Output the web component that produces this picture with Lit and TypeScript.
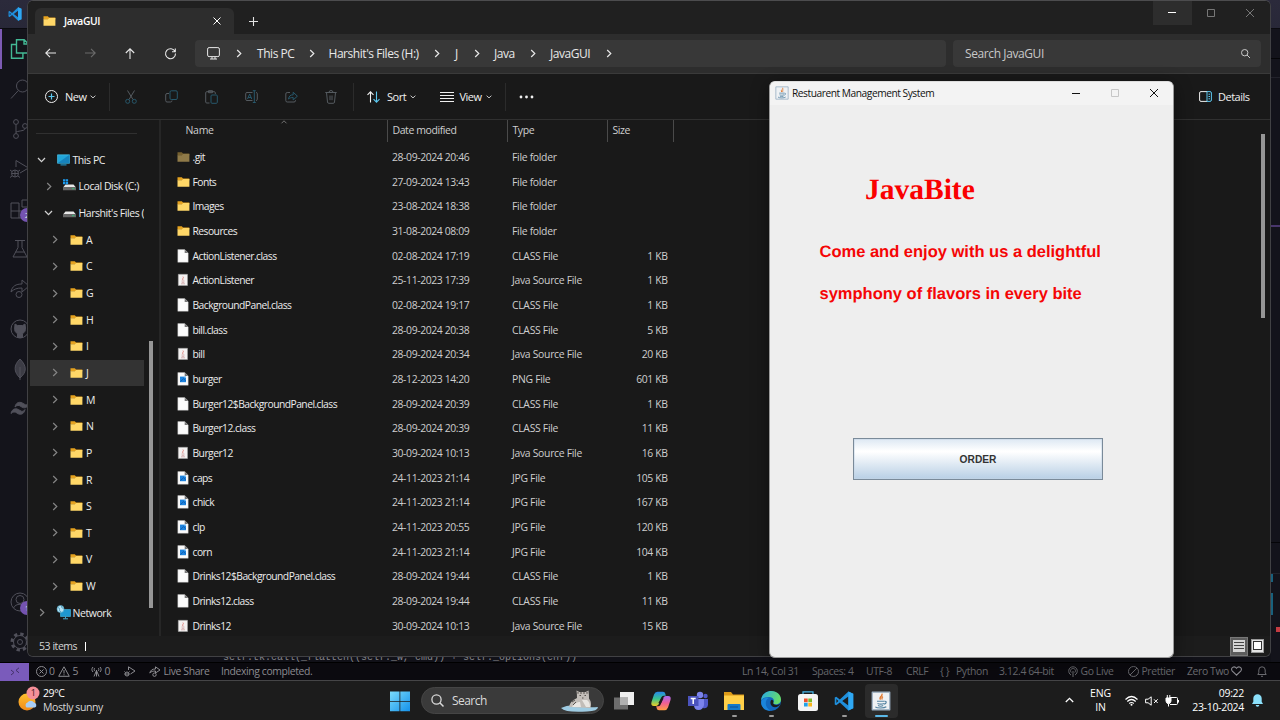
import { LitElement, html, svg, css } from "lit";
import { customElement } from "lit/decorators.js";
import { styleMap } from "lit/directives/style-map.js";

const icon = (w: number, h: number, box: string, body: unknown) =>
  html`<svg width=${w} height=${h} viewBox=${box} fill="none" stroke="currentColor">${body}</svg>`;

const px = (n: number) => styleMap({ width: n + "px" });

const folder = (dim = false) =>
  icon(13, 12, "0 0 13 12", svg`
    <path d="M0.5 1.2h4.3l1.2 1.4h6.3v2H.5z" fill=${dim ? "#75602f" : "#e5a21f"} stroke="none"/>
    <path d="M.5 10.7V4.2h4.4l1.3-1.1h6.2v7.6z" fill=${dim ? "#8f7a48" : "#ffd767"} stroke="none"/>`);

const page = (inner: unknown = null) =>
  icon(12, 14, "0 0 12 14", svg`
    <path d="M.8.6h6.9l3.5 3.3v9.4H.8z" fill="#fbfbfb" stroke="#b5b5b5" stroke-width=".4"/>
    <path d="M7.7.6v3.3h3.5z" fill="#777" stroke="none"/>${inner}`);

const javaPage = () =>
  icon(12, 14, "0 0 12 14", svg`
    <path d="M1.3 1.3h9.2v11.2H1.3z" fill="#f4f2f2" stroke="#a9a9a9" stroke-width=".5"/>
    <path d="M6 3.600c1.400 1.200-1.400 1.800 0 3.600" stroke="#d96c66" stroke-width=".8"/>
    <path d="M4.500 8h3M4.700 9.400h2.600M4 10.800h4" stroke="#c99" stroke-width=".7"/>`);

const picture = () =>
  page(svg`<path d="M3 4.600h6v5.600H3z" fill="#1d83de" stroke="none"/><path d="M3.400 9.600 6.600 6.600l2 2.200" stroke="#0b57a8" stroke-width=".8"/><path d="M7.600 4.800h1.200v1.200H7.600z" fill="#8fd0ff" stroke="none"/>`);

const chevR = () => icon(6, 9, "0 0 6 9", svg`<path d="m1.200 1 3.600 3.500L1.200 8" stroke-width="1.200"/>`);
const chevD = () => icon(9, 6, "0 0 9 6", svg`<path d="m1 1 3.500 3.600L8 1" stroke-width="1.300"/>`);
const chevS = () => icon(6, 4, "0 0 6 4", svg`<path d="m.6.7 2.400 2.200L5.400.7" stroke-width=".8"/>`);

const codeLogo = (s: number) =>
  icon(s, s, "0 0 24 24", svg`
    <path d="M17.300.6 7 10.100 2.700 6.800.9 7.700v8.600l1.800.9L7 13.900l10.300 9.500 5.800-2.600V3.200zM2.900 14.300V9.700L5.200 12zm14.300 3.200L9.900 12l7.300-5.500z" fill="#1f8fdc" stroke="none" fill-rule="evenodd"/>
    <path d="M17.300.6v22.800l5.800-2.600V3.200z" fill="#2fa8f3" stroke="none"/>`);

const cup = (s: number) =>
  icon(s, s, "0 0 20 20", svg`
    <path d="M1.200 1.200h17.600v17.600H1.200z" fill="#eef1f4" stroke="#9bb0c4" stroke-width="1.200" stroke-linejoin="round"/>
    <path d="M10.800 2.600c2 2.300-3.600 3.100-1.300 6M12 5.600c-1.900 1-.9 1.900-.9 3" stroke="#e0762c" stroke-width="1.300"/>
    <path d="M6 10.200h7.200M6.500 12.500c2 .8 4.600.8 6.400 0M7 14.600c1.600.7 3.800.7 5.200 0M13.400 10.300c2.600-.4 2.300 2.200-.3 2.800" stroke="#5382a1" stroke-width="1.100"/>
    <path d="M4.300 15.800c1.600 1.600 9 1.600 11 0" stroke="#5382a1" stroke-width="1.100"/>`);

const FILES: [string, string, string, string, string][] = [
  ["hidden", ".git", "28-09-2024 20:46", "File folder", ""],
  ["folder", "Fonts", "27-09-2024 13:43", "File folder", ""],
  ["folder", "Images", "23-08-2024 18:38", "File folder", ""],
  ["folder", "Resources", "31-08-2024 08:09", "File folder", ""],
  ["page", "ActionListener.class", "02-08-2024 17:19", "CLASS File", "1 KB"],
  ["java", "ActionListener", "25-11-2023 17:39", "Java Source File", "1 KB"],
  ["page", "BackgroundPanel.class", "02-08-2024 19:17", "CLASS File", "1 KB"],
  ["page", "bill.class", "28-09-2024 20:38", "CLASS File", "5 KB"],
  ["java", "bill", "28-09-2024 20:34", "Java Source File", "20 KB"],
  ["image", "burger", "28-12-2023 14:20", "PNG File", "601 KB"],
  ["page", "Burger12$BackgroundPanel.class", "28-09-2024 20:39", "CLASS File", "1 KB"],
  ["page", "Burger12.class", "28-09-2024 20:39", "CLASS File", "11 KB"],
  ["java", "Burger12", "30-09-2024 10:13", "Java Source File", "16 KB"],
  ["image", "caps", "24-11-2023 21:14", "JPG File", "105 KB"],
  ["image", "chick", "24-11-2023 21:14", "JPG File", "167 KB"],
  ["image", "clp", "24-11-2023 20:55", "JPG File", "120 KB"],
  ["image", "corn", "24-11-2023 21:14", "JPG File", "104 KB"],
  ["page", "Drinks12$BackgroundPanel.class", "28-09-2024 19:44", "CLASS File", "1 KB"],
  ["page", "Drinks12.class", "28-09-2024 19:44", "CLASS File", "11 KB"],
  ["java", "Drinks12", "30-09-2024 10:13", "Java Source File", "15 KB"],
];

const fileIcon = (k: string) =>
  k === "hidden" ? folder(true) : k === "folder" ? folder() : k === "java" ? javaPage() : k === "image" ? picture() : page();

const base = css`
  *, :host { box-sizing: border-box; }
  svg { display: block; flex: none; overflow: visible; }
  :host { font-family: "Open Sans", "Noto Sans", sans-serif; white-space: nowrap; }
`;

@customElement("code-editor")
class CodeEditor extends LitElement {
  static styles = [base, css`
    :host { display: flex; flex-direction: column; height: 681px; background: #111118; color: #5d5d68; }
    .title { height: 29px; background: linear-gradient(#2b2a3b, #282838); border-bottom: 1px solid #0b0b10; padding: 7px 0 0 8px; flex: none; }
    .body { flex: 1; display: flex; min-height: 0; }
    .acts { width: 40px; display: flex; flex-direction: column; background: #14141b; }
    .act { height: 40px; display: flex; align-items: center; justify-content: center; position: relative; flex: none; color: #50505a; }
    .act.on { color: #43b995; box-shadow: inset 2px 0 #7d5bb4; }
    .gap { flex: 1; }
    .dot { position: absolute; left: 20px; top: 19px; width: 14px; height: 14px; border-radius: 7px; background: #7453b0; color: #ddd; font-size: 8px; line-height: 14px; text-align: center; }
    .code { flex: 1; display: flex; align-items: flex-end; padding-left: 183px; font: 10px/8px "Liberation Mono", monospace; color: #85858a; }
    .map { width: 9px; display: flex; flex-direction: column; background: #13131b; }
    .m1 { height: 30px; border-bottom: 1px solid #050508; }
    .m2 { height: 19px; border-bottom: 1px solid #22222b; }
    .m3 { height: 149px; border-bottom: 2px solid #49366c; }
    .m4 { height: 316px; border-bottom: 1px solid #050508; }
    .m5 { height: 31px; border-bottom: 1px solid #22222b; }
    .b { width: 2px; background: #18607d; flex: none; }
    .b1 { height: 8px; } .b2 { height: 22px; margin-top: 11px; }
    .red { width: 4px; height: 5px; margin: 12px 0 0 5px; background: #c43b42; }
    .status { height: 19px; display: flex; align-items: center; background: #0b0a0f; border-top: 1px solid #000; border-bottom: 1px solid #454547; color: #8b8b90; font-size: 10.400px; letter-spacing: -0.38px; line-height: 16px; flex: none; }
    .status span { display: block; }
    .remote { width: 29px; height: 18px; background: #7a5bbb; color: #43316a; display: flex; align-items: center; justify-content: center; }
    .item { display: flex; align-items: center; gap: 2.500px; flex: none; padding-bottom: 1px; }
    .right { display: flex; margin-left: auto; color: #6a6a6f; }
  `];
  render() {
    const a = (body: unknown, dot = "", on = false) =>
      html`<div class="act ${on ? "on" : ""}">${icon(20, 20, "0 0 20 20", body)}${dot ? html`<span class="dot">${dot}</span>` : ""}</div>`;
    const it = (w: number, c: unknown) => html`<div class="item" style=${px(w)}>${c}</div>`;
    return html`
      <div class="title">${codeLogo(14)}</div>
      <div class="body">
        <div class="acts">
          ${a(svg`<path d="M6.500.8h7.700l4 4V14H6.500zM14 .8v4.200h4M6.500 5.500H1.500v13.800h11.400V14" stroke-width="1.400"/>`, "", true)}
          ${a(svg`<circle cx="12.500" cy="7" r="6"/><path d="m8.300 11.500-7.300 8"/>`)}
          ${a(svg`<circle cx="6" cy="3" r="2.400"/><circle cx="6" cy="17" r="2.400"/><circle cx="15" cy="7" r="2.400"/><path d="M6 5.500v9M15 9.500c0 2.500-5 2-9 3.500"/>`)}
          ${a(svg`<path d="M6 8V1.500L18.500 9 10 14"/><circle cx="5" cy="14.500" r="3.500"/><path d="M1.500 14.500h7M5 11v7M0 11l2 1.500M10 11l-2 1.500M0 18.500l2-1.500M10 18.500 8 17"/>`)}
          ${a(svg`<path d="M1 4h8v8h8v7H1zM1 12h8v7M12 1h7v7h-7z"/>`, "2")}
          ${a(svg`<path d="M5 1.500h10M8 1.500v7L3 18h14L12 8.500v-7M5.500 13h9"/>`)}
          ${a(svg`<path d="M1 13C2 7 6 5 12 5V1l7 6-7 6V9C7 9 4 10 1 13z"/><circle cx="9" cy="15.500" r="3"/>`)}
          ${a(svg`<circle cx="10" cy="10" r="9"/><path d="M7.500 18.500v-4C5 13.500 4.500 11.500 4.700 9L5 5l2.500 1.500h5L15 5l.5 4c0 2.500-.5 4.500-3 5.500v4z" fill="currentColor"/>`)}
          ${a(svg`<path d="M10 0c7 7 7 13 0 19C3.500 13 3.500 6 10 0z" fill="#3c3c45"/><path d="M10 8v13"/>`)}
          ${a(svg`<path d="M5 8c1-5 5-6 9-3 2 1.500 4 1 5-1-1 5-5 6-8 3.500C9 6 7 6 5 8zM1 14.500c1-5 5-6 9-3 2 1.500 4 1 5-1-1 5-5 6-8 3.500-2-1.500-4-1.500-6 .5z" fill="currentColor"/>`)}
          <div class="gap"></div>
          ${a(svg`<circle cx="10" cy="10" r="9"/><circle cx="10" cy="7.500" r="4"/><path d="M3.500 16c2-5 11-5 13 0"/>`, "1")}
          ${a(svg`<circle cx="10" cy="10" r="8" stroke-width="3" stroke-dasharray="3.300 2.983"/><circle cx="10" cy="10" r="6.500"/><circle cx="10" cy="10" r="2.500"/>`)}
        </div>
        <div class="code">self.tk.call(_flatten((self._w, cmd)) + self._options(cnf))</div>
        <div class="map"><div class="m1"></div><div class="m2"></div><div class="m3"></div><div class="m4"></div><div class="m5"></div>
          <div class="b b1"></div><div class="b b2"></div><div class="red"></div></div>
      </div>
      <div class="status">
        <div class="remote">${icon(10, 9, "0 0 10 9", svg`<path d="m1 3 3 2.500L1 8M9 .8 6 3.300l3 2.500"/>`)}</div>
        ${it(6.5, "")}
        ${it(22.5, html`${icon(11, 11, "0 0 11 11", svg`<circle cx="5.500" cy="5.500" r="5"/><path d="m3.500 3.500 4 4m0-4-4 4"/>`)}<span>0</span>`)}
        ${it(33, html`${icon(12, 11, "0 0 12 11", svg`<path d="M6 .8 11.300 10.300H.7zM6 4v3.500M6 8.300v1"/>`)}<span>5</span>`)}
        ${it(33, html`${icon(11, 11, "0 0 11 11", svg`<path d="M5.500 4v6.500M3 10.500l2.500-6 2.500 6M2 1C.5 2.500.5 4.500 2 6M9 1c1.500 1.500 1.500 3.500 0 5M3.700 2c-.7 1-.7 2 0 3M7.300 2c.7 1 .7 2 0 3"/>`)}<span>0</span>`)}
        ${it(25, icon(12, 11, "0 0 12 11", svg`<path d="M4.500 4V.8L11 5 6.500 8"/><circle cx="3" cy="8" r="2"/><path d="M.5 8h5M.5 5.500 1.500 6.500M5.500 5.500l-1 1"/>`))}
        ${it(72, html`${icon(12, 11, "0 0 12 11", svg`<path d="M.8 7C1.500 4 3.500 3 6.500 3V.8L11 4 6.500 7V5C4 5 2 5.500.8 7z"/><circle cx="5.500" cy="8.700" r="1.700"/>`)}<span>Live Share</span>`)}
        ${it(100, "Indexing completed.")}
        <div class="right">
          ${it(70, "Ln 14, Col 31")}${it(54, "Spaces: 4")}${it(40, "UTF-8")}${it(34, "CRLF")}
          ${it(16, "{ }")}${it(43, "Python")}${it(69, "3.12.4 64-bit")}
          ${it(60, html`${icon(10, 11, "0 0 10 11", svg`<path d="M5 5v6M3 9C-.5 7 0 .8 5 .8S10.500 7 7 9M3.300 6.500C1.500 4.500 3 2.500 5 2.500s3.500 2 1.700 4"/>`)}<span>Go Live</span>`)}
          ${it(59, html`${icon(11, 11, "0 0 11 11", svg`<circle cx="5.500" cy="5.500" r="5"/><path d="m2 9 7-7"/>`)}<span>Prettier</span>`)}
          ${it(70, html`<span>Zero Two</span>${icon(11, 10, "0 0 10 9", svg`<path d="M5 8.300 1 4.300C-.8 2 2.800-.8 5 2c2.200-2.800 5.800 0 4 2.300z" stroke="#8a8a90"/>`)}`)}
          ${it(23, icon(10, 11, "0 0 10 11", svg`<path d="M.8 8.500h8.400L8.200 6.800V4a3.200 3.200 0 0 0-6.400 0v2.800zM4 10.300h2"/>`))}
        </div>
      </div>`;
  }
}

@customElement("file-explorer")
class FileExplorer extends LitElement {
  static styles = [base, css`
    :host { display: flex; flex-direction: column; width: 1244px; height: 657px; border: 1px solid #414144; border-top-color: #4c4c4e; border-radius: 6px; overflow: hidden; background: #191919; color: #e4e4e4; font-size: 10.500px; letter-spacing: -0.4px; line-height: 16px; }
    .tabs { height: 33px; background: #202020; display: flex; align-items: flex-start; flex: none; }
    .tab { margin: 7px 0 0 7px; width: 199px; height: 26px; background: #2d2d2d; border-radius: 6px 6px 0 0; display: flex; align-items: center; padding: 0 13px 0 8px; font-size: 10.300px; font-weight: 600; letter-spacing: -0.4px; color: #fff; }
    .tab span { margin: 0 auto 0 8px; }
    .plus { margin: 16px auto 0 15px; }
    .wb { width: 38.700px; height: 24px; display: flex; align-items: center; justify-content: center; color: #777; }
    .wb.hot { background: #2d2d2d; color: #fff; }
    .wrap { width: 117px; display: flex; }
    .nav { height: 40px; background: #2d2d2d; border-bottom: 1px solid #3a3a3a; display: flex; align-items: center; flex: none; color: #e8e8e8; }
    .nb { width: 40px; display: flex; justify-content: center; }
    .nb.off { color: #6a6a6a; }
    .arrows { display: flex; padding-left: 2px; width: 167px; }
    .addr { width: 751px; height: 27px; background: #383838; border-radius: 4px; display: flex; align-items: center; font-size: 12px; letter-spacing: -0.45px; padding-left: 12px; }
    .search { width: 308px; height: 27px; margin-left: 7px; background: #383838; border-radius: 4px; display: flex; align-items: center; justify-content: space-between; padding: 0 11px 0 12px; color: #c8c8c8; font-size: 12px; letter-spacing: -0.4px; }
    .cell { display: flex; align-items: center; flex: none; }
    .cmd { height: 46px; border-bottom: 1px solid #303030; display: flex; align-items: center; flex: none; padding-left: 17px; font-size: 11px; letter-spacing: -0.5px; color: #f0f0f0; }
    .sep { width: 1px; height: 28px; background: #2b2b2b; flex: none; }
    .ico { width: 40px; display: flex; justify-content: center; color: #555b60; }
    .main { flex: 1; display: flex; min-height: 0; }
    .tree { width: 121px; padding: 13px 0 0 2px; color: #ececec; }
    .rule { height: 1px; background: #303030; margin: 0 12px 12.500px 6px; }
    .node { height: 26.650px; width: 114px; display: flex; align-items: center; overflow: hidden; letter-spacing: -0.44px; }
    .node.on { background: #333; }
    .node .tw { width: 9px; display: flex; justify-content: center; color: #858585; }
    .node .tw.open { color: #d0d0d0; }
    .node b { font-weight: 400; margin-left: 3px; }
    .l0 { padding-left: 7px; } .l1 { padding-left: 14px; } .l2 { padding-left: 20.500px; }
    .glyph { margin-left: 10.500px; }
    .l1 .glyph { margin-left: 9.500px; }
    .tbar { width: 4px; height: 267px; margin-top: 221px; background: #969696; }
    .split { width: 2px; margin-left: 6px; background: #262626; }
    .list { flex: 1; display: flex; flex-direction: column; }
    .head { height: 24.800px; display: grid; grid-template-columns: 227px 120px 100px 66px; color: #cfcfcf; flex: none; position: relative; font-size: 10.500px; letter-spacing: -0.42px; }
    .head div { height: 22px; border-right: 1px solid #4a4a4a; padding: 2px 0 0 4.500px; }
    .head .nm { padding-left: 24.500px; letter-spacing: -0.3px; }
    .up { position: absolute; left: 120px; top: 0; color: #888; }
    .row { height: 24.670px; display: grid; grid-template-columns: 16px 199.500px 120px 95.500px 60px; align-items: center; padding-left: 15.500px; flex: none; color: #cecece; font-size: 10.400px; letter-spacing: -0.38px; }
    .row .n { color: #ececec; font-size: 10.300px; letter-spacing: -0.53px; }
    .row .t { letter-spacing: -0.3px; }
    .row .s { text-align: right; }
    .rows { overflow: hidden; flex: 1; }
    .sbar { width: 4px; height: 184px; margin: 14px 5px 0 0; background: #969696; }
    .foot { height: 20px; background: #1c1c1c; display: flex; align-items: center; padding-left: 11px; flex: none; color: #d5d5d5; letter-spacing: -0.45px; }
    .caret { width: 1px; height: 9px; background: #fff; margin-left: 8px; margin-right: auto; }
    .v1 { width: 18px; height: 19px; background: #5c5c5c; border: 1px solid #777; display: flex; align-items: center; justify-content: center; }
    .v2 { width: 13px; height: 14px; margin: 0 6px 0 3px; background: #e4e4e4; border: 1px solid #999; padding: 1px; }
    .v2 i { display: block; width: 9px; height: 9px; background: #fff; border: 1.500px solid #333; }
  `];
  render() {
    const c = (w: number, x: unknown) => html`<div class="cell" style=${px(w)}>${x}</div>`;
    const node = (lvl: number, open: boolean, glyph: unknown, name: string, on = false) => html`
      <div class="node l${lvl} ${on ? "on" : ""}"><span class="tw ${open ? "open" : ""}">${open ? chevD() : chevR()}</span><span class="glyph">${glyph}</span><b>${name}</b></div>`;
    const drive = (win: boolean) => icon(13, 12, "0 0 13 12", svg`
      <path d="M2.500 4.500h8L13 7.500H0z" fill="#e8e8e8" stroke="none"/><path d="M0 7h13v3.300H0z" fill="#686868" stroke="none"/><path d="M9 8.700h2.500" stroke="#2ad17a" stroke-width=".8"/>
      ${win ? svg`<path d="M0-.8h2.300v2.300H0zM2.800-.8h2.300v2.300H2.800zM0 2h2.300v2.300H0zM2.800 2h2.300v2.300H2.800z" fill="#1e9cf0" stroke="none"/>` : ""}`);
    const pc = icon(13, 12, "0 0 13 12", svg`<path d="M.5.8h12v8.500H.5z" fill="#22a5d8" stroke="#51c9ee" stroke-width=".6"/><path d="M12.500.8v8.500H.5z" fill="#1683bd" stroke="none"/><path d="M3.500 10.800h6" stroke="#1f87b4" stroke-width="1.200"/>`);
    const net = icon(13, 13, "0 0 13 13", svg`<path d="M3.500 3.500h10v7h-10z" fill="#1e98d0" stroke="#46bde8" stroke-width=".6"/><path d="M8.500 10.500v2M6 12.800h5" stroke="#46a9cc"/><circle cx="3.500" cy="3" r="3.500" fill="#b9e3f3" stroke="#4aa3c5" stroke-width=".6"/><path d="M1 1.500q2 .5 1.500 2T4 6M4.500 0q-.5 2 2 2.500" stroke="#3c93b8" stroke-width=".8"/>`);
    return html`
      <div class="tabs">
        <div class="tab">${folder()}<span>JavaGUI</span>${icon(8, 8, "0 0 8 8", svg`<path d="m.5.5 7 7m0-7-7 7"/>`)}</div>
        <div class="plus">${icon(9, 9, "0 0 9 9", svg`<path d="M4.500 0v9M0 4.500h9" stroke-width="1.100"/>`)}</div>
        <div class="wrap">
          <div class="wb hot">${icon(8, 8, "0 0 8 8", svg`<path d="M0 3.500h8"/>`)}</div>
          <div class="wb">${icon(8, 8, "0 0 8 8", svg`<path d="M.5.5h7v7h-7z"/>`)}</div>
          <div class="wb">${icon(8, 8, "0 0 8 8", svg`<path d="m0 0 8 8m0-8-8 8"/>`)}</div>
        </div>
      </div>
      <div class="nav">
        <div class="arrows">
          <div class="nb">${icon(11, 10, "0 0 11 10", svg`<path d="M11 5H.8M5 .8.8 5 5 9.200" stroke-width="1.100"/>`)}</div>
          <div class="nb off">${icon(11, 10, "0 0 11 10", svg`<path d="M0 5h10.200M6 .8 10.200 5 6 9.200" stroke-width="1.100"/>`)}</div>
          <div class="nb">${icon(10, 11, "0 0 10 11", svg`<path d="M5 11V.8M.8 5 5 .8 9.200 5" stroke-width="1.100"/>`)}</div>
          <div class="nb">${icon(11, 11, "0 0 11 11", svg`<path d="M10 3.500A5 5 0 1 0 10.500 5.500M10.300.5v3.300H7" stroke-width="1.100"/>`)}</div>
        </div>
        <div class="addr">
          ${c(28.5, icon(13, 13, "0 0 13 13", svg`<rect x=".6" y=".6" width="11.800" height="9" rx="1.500"/><path d="M3 12h7M5 10v2M8 10v2"/>`))}
          ${c(21.5, chevR())}${c(51.5, "This PC")}${c(20, chevR())}${c(105.5, "Harshit's Files (H:)")}${c(21, chevR())}
          ${c(19, "J")}${c(20, chevR())}${c(36, "Java")}${c(20, chevR())}${c(56, "JavaGUI")}${c(18, chevR())}
        </div>
        <div class="search"><span>Search JavaGUI</span>${icon(9, 9, "0 0 9 9", svg`<circle cx="3.700" cy="3.700" r="3.200"/><path d="m6 6 3 3"/>`)}</div>
      </div>
      <div class="cmd">
        ${c(20, icon(13, 13, "0 0 13 13", svg`<circle cx="6.500" cy="6.500" r="6"/><path d="M6.500 3.500v6M3.500 6.500h6" stroke="#5cc8f0" stroke-width="1.200"/>`))}
        ${c(25, "New")}${c(18.5, chevS())}<div class="sep"></div>${c(1.5, "")}
        <div class="ico">${icon(12, 14, "0 0 12 14", svg`<path d="m2.500.5 5.500 9M9.500.5 4 9.500"/><circle cx="2.700" cy="11.300" r="2" stroke="#27586c"/><circle cx="9.300" cy="11.300" r="2" stroke="#27586c"/>`)}</div>
        <div class="ico">${icon(13, 13, "0 0 13 13", svg`<path d="M4 3.500H2Q.7 3.500.7 5v5.500Q.7 12 2 12h3.500Q7 12 7 10.500"/><rect x="5" y=".8" width="7.300" height="8.700" rx="1.300" stroke="#27586c"/>`)}</div>
        <div class="ico">${icon(13, 14, "0 0 13 14", svg`<path d="M4.500 13H1.800Q.7 13 .7 12V2.800Q.7 1.700 1.800 1.700h7.400Q10.300 1.700 10.300 2.800V4M3.500.7h4v2h-4z"/><rect x="6" y="5" width="6.300" height="8.300" rx="1" stroke="#27586c"/>`)}</div>
        <div class="ico">${icon(13, 13, "0 0 13 13", svg`<path d="M7.500 10.500H2Q.7 10.500.7 9.300V3.700Q.7 2.500 2 2.500h5.500M11 2.500q1.300 0 1.300 1.200v5.600q0 1.200-1.300 1.200"/><path d="M9.300.7v12M7.800.7h3M7.800 12.500h3M2.500 9 4.700 4l2 5M3.200 7.500h3" stroke="#27586c"/>`)}</div>
        <div class="ico">${icon(13, 12, "0 0 13 12", svg`<path d="M5 1.500H2.200Q.8 1.500.8 3v6.500Q.8 11 2.200 11H9q1.500 0 1.500-1.500V9"/><path d="M3.500 8c.5-3 2-4.200 4.700-4.200V1.200l4.200 4-4.200 3.700V6.500C6 6.500 4.700 7 3.500 8z" stroke="#27586c"/>`)}</div>
        <div class="ico">${icon(12, 14, "0 0 12 14", svg`<path d="M.3 2.500h11.400M4 2.500q0-2 2-2t2 2M1.500 2.500 2.500 12q.1 1.300 1.300 1.300h4.400q1.200 0 1.300-1.300l1-9.500M5 5.500v4.700M7 5.500v4.700"/>`)}</div>
        ${c(1.5, "")}<div class="sep"></div>${c(13.5, "")}
        ${c(20, icon(13, 12, "0 0 13 12", svg`<path d="M3.500 11.500V.8M.5 3.800l3-3 3 3" stroke-width="1.100"/><path d="M9.500.5v10.700M6.500 8.200l3 3 3-3" stroke="#5cc8f0" stroke-width="1.100"/>`))}
        ${c(22.5, "Sort")}${c(30, chevS())}
        ${c(20, icon(14, 10, "0 0 14 10", svg`<path d="M0 .5h14M0 3.500h14M0 6.500h14M0 9.500h14"/>`))}
        ${c(26, "View")}${c(19.5, chevS())}<div class="sep"></div>${c(12.5, "")}
        ${c(680, icon(15, 4, "0 0 15 4", svg`<circle cx="2" cy="2" r="1.400" fill="currentColor" stroke="none"/><circle cx="7.500" cy="2" r="1.400" fill="currentColor" stroke="none"/><circle cx="13" cy="2" r="1.400" fill="currentColor" stroke="none"/>`))}
        ${c(19.5, icon(13, 11, "0 0 13 11", svg`<path d="M8 .6H2Q.6.6.6 2v7Q.6 10.400 2 10.400h6"/><path d="M8 .6h3Q12.400.6 12.400 2v7q0 1.400-1.400 1.400H8zM9.500 3.200h1.500M9.500 5.500h1.500M9.500 7.800h1.500" stroke="#5cc8f0"/>`))}
        <span>Details</span>
      </div>
      <div class="main">
        <div class="tree">
          <div class="rule"></div>
          ${node(0, true, pc, "This PC")}${node(1, false, drive(true), "Local Disk (C:)")}${node(1, true, drive(false), "Harshit's Files (H:)")}
          ${["A", "C", "G", "H", "I", "J", "M", "N", "P", "R", "S", "T", "V", "W"].map((n) => node(2, false, folder(), n, n === "J"))}
          ${node(0, false, net, "Network")}
        </div>
        <div class="tbar"></div><div class="split"></div>
        <div class="list">
          <div class="head"><div class="nm">Name</div><div>Date modified</div><div>Type</div><div>Size</div>
            <span class="up">${icon(6, 4, "0 0 6 4", svg`<path d="m.5 3.300 2.500-2.500 2.500 2.500" stroke-width=".8"/>`)}</span></div>
          <div class="rows">
            ${FILES.map(([k, n, d, t, s]) => html`<div class="row"><span>${fileIcon(k)}</span><span class="n">${n}</span><span>${d}</span><span class="t">${t}</span><span class="s">${s}</span></div>`)}
          </div>
        </div>
        <div class="sbar"></div>
      </div>
      <div class="foot"><span>53 items</span><span class="caret"></span>
        <div class="v1">${icon(12, 12, "0 0 12 12", svg`<path d="M0 0h12v12H0z" fill="#d5d5d5" stroke="none"/><path d="M1 2.500h10M1 5.500h10M1 8.500h10" stroke="#444"/>`)}</div>
        <div class="v2"><i></i></div></div>`;
  }
}

@customElement("java-window")
class JavaWindow extends LitElement {
  static styles = [base, css`
    :host { display: flex; flex-direction: column; width: 405px; height: 577px; background: #eee; border: 1px solid #9a9a9a; border-top-color: #ddd; border-radius: 6px; overflow: hidden; box-shadow: 0 4px 18px rgba(0, 0, 0, .45); }
    .bar { height: 23px; background: #f3f3f3; display: flex; align-items: center; padding: 0 0 1px 5px; font-size: 10.200px; letter-spacing: -0.45px; color: #111; flex: none; }
    .bar span { margin: 0 auto 0 3px; }
    .b { width: 39px; display: flex; justify-content: center; color: #111; }
    .b.off { color: #c6c6c6; }
    .content { flex: 1; display: flex; flex-direction: column; align-items: flex-start; }
    h1 { margin: 68px 0 0 95px; font: bold 29.500px/34px "Liberation Serif", serif; color: #fa0000; text-rendering: geometricPrecision; }
    p { margin: 0 0 0 49.500px; font: bold 16.500px/42px "Liberation Sans", sans-serif; color: #f50505; text-rendering: geometricPrecision; }
    .p1 { margin-top: 24px; }
    button { margin: 123px 0 0 83px; width: 250px; height: 42px; padding: 1px 0 0; border: 1px solid #7a8a99; box-shadow: inset 0 0 0 .5px #c5d5e5; background: linear-gradient(#dde8f3, #fff 30%, #fff 32%, #b8cfe5); font: bold 10.200px "Liberation Sans", sans-serif; color: #333; }
  `];
  render() {
    return html`
      <div class="bar">${cup(14)}<span>Restuarent Management System</span>
        <div class="b">${icon(8, 8, "0 0 8 8", svg`<path d="M0 4.500h8"/>`)}</div>
        <div class="b off">${icon(8, 8, "0 0 8 8", svg`<path d="M.5.5h7v7h-7z"/>`)}</div>
        <div class="b">${icon(8, 8, "0 0 8 8", svg`<path d="m0 0 8 8m0-8-8 8"/>`)}</div></div>
      <div class="content"><h1>JavaBite</h1><p class="p1">Come and enjoy with us a delightful</p><p>symphony of flavors in every bite</p><button>ORDER</button></div>`;
  }
}

@customElement("task-bar")
class TaskBar extends LitElement {
  static styles = [base, css`
    :host { display: flex; align-items: center; height: 39px; background: #1c1c1c; color: #fff; font-size: 10.500px; letter-spacing: -0.2px; line-height: 13.300px; }
    .weather { width: 379px; display: flex; align-items: center; padding-left: 17px; gap: 2px; color: #d6d6d6; letter-spacing: -0.4px; }
    .t { color: #fff; }
    .app { width: 36.700px; height: 34px; display: flex; align-items: center; justify-content: center; position: relative; flex: none; }
    .app.run::after { content: ""; position: absolute; bottom: 1px; width: 5px; height: 2px; border-radius: 1px; background: #9a9a9a; }
    .app.sel::after { width: 13px; background: #5ab8e8; }
    .app.sel { background: #2b2b2b; border-radius: 4px; width: 33px; margin-left: 2px; }
    .start { width: 42px; padding-right: 1px; }
    .pill { width: 183px; height: 27px; border-radius: 14px; background: #3a3a3a; border: 1px solid #454545; display: flex; align-items: center; padding: 0 5px 0 9px; font-size: 12px; letter-spacing: -0.55px; color: #dadada; margin-right: 2px; }
    .pill span { margin: 0 auto 0 8px; }
    .tray { margin-left: auto; display: flex; align-items: center; }
    .up { width: 22px; } .lang { width: 31px; text-align: center; margin-right: 9px; }
    .sys { width: 20px; display: flex; } .time { text-align: right; width: 53px; letter-spacing: -0.3px; display: flex; flex-direction: column; align-items: flex-end; margin-left: 6px; }
    .bell { width: 36px; padding-left: 7.500px; }
  `];
  render() {
    const app = (cls: string, body: unknown) => html`<div class="app ${cls}">${body}</div>`;
    const i20 = (b: unknown) => icon(20, 20, "0 0 20 20", b);
    return html`
      <div class="weather">${icon(24, 24, "0 0 24 24", svg`<defs><linearGradient id="sun" x2="0" y2="1"><stop stop-color="#ffc02e"/><stop offset="1" stop-color="#f08a1c"/></linearGradient></defs>
          <circle cx="10" cy="13" r="8.500" fill="url(#sun)" stroke="none"/><path d="M9.500 18.500a3 3 0 0 1 1-5 4 4 0 0 1 6.500 0 2.700 2.700 0 0 1 1 5z" fill="#a8cdf5" stroke="none"/>
          <circle cx="16" cy="4" r="6.500" fill="#f58f98" stroke="none"/><text x="16" y="7.300" font-size="9" text-anchor="middle" fill="#40161a" stroke="none">1</text>`)}
        <div><div class="t">29°C</div><div>Mostly sunny</div></div></div>
      ${app("start", i20(svg`<defs><linearGradient id="win" x2="1" y2="1"><stop stop-color="#7bdcfb"/><stop offset="1" stop-color="#1491ea"/></linearGradient></defs><path d="M0 .5h9.500V10H0zM10.300.5H20V10h-9.700zM0 10.800h9.500v9.400H0zM10.300 10.800H20v9.400h-9.700z" fill="url(#win)" stroke="none"/>`))}
      <div class="pill">${icon(13, 13, "0 0 13 13", svg`<circle cx="5.500" cy="5.500" r="4.600" stroke-width="1.300"/><path d="m8.800 8.800 3.700 3.700" stroke-width="1.500"/>`)}<span>Search</span>
        ${icon(37, 22, "0 0 37 22", svg`<path d="M0 18q8-4 18-2t19 1q0 4-11 4.500Q5 23 0 18z" fill="#9ecbe2" stroke="none"/>
          <path d="M8 17q1-6 8-9 0-4-.5-7.500l3 1.500h6l3-1.500q.500 4 .5 8 3 4 1.500 9.500z" fill="#c2bdb8" stroke="none"/><path d="M11 17q3-5 8-5l1 5zM21 10l4 7h4q0-5-3-7z" fill="#e9e6e2" stroke="none"/>
          <path d="M18.500 5.500H20M23.500 5.500H25M21 8h1.500M11 12l3-2M12 15l3-3M17 1.800v2M26 1.800v2M20 2v2M23 2v2" stroke="#59534f"/>`)}</div>
      ${app("", i20(svg`<path d="M6 1h14v13H6z" fill="#eee" stroke="none"/><path d="M0 6.500h14v12H0z" fill="#777" opacity=".9" stroke="none"/><path d="M6 6.500h8V14H6z" fill="#b0b0b0" stroke="none"/>`))}
      ${app("", i20(svg`<defs><linearGradient id="cp1" x2="0" y2="1"><stop stop-color="#2787ea"/><stop offset=".5" stop-color="#38c48c"/><stop offset="1" stop-color="#f2cf25"/></linearGradient><linearGradient id="cp2" x2="0" y2="1"><stop stop-color="#a86af3"/><stop offset=".5" stop-color="#ef5f94"/><stop offset="1" stop-color="#ff9e42"/></linearGradient></defs>
          <path d="M6.500.800h5.500q2 0 2.300 2l.5 2h-2q-2 0-2.700 2.200L8.300 12q-1 3-3 3H3Q-.5 15 .5 11L3 3.500Q4 .8 6.500.8z" fill="url(#cp1)" stroke="none"/>
          <path d="M13.500 19.200H8q-2 0-2.300-2l-.5-2h2q2 0 2.700-2.200L11.700 8q1-3 3-3H17q3.500 0 2.500 4L17 16.500q-1 2.700-3.500 2.700z" fill="url(#cp2)" stroke="none"/><path d="M8.500 12.500 11.500 7" stroke="#1c1c1c" stroke-width="2.500"/>`))}
      ${app("", i20(svg`<circle cx="12" cy="4" r="3.200" fill="#7b83eb" stroke="none"/><circle cx="17.500" cy="5" r="2.200" fill="#5059c9" stroke="none"/><path d="M14 8h6v6q-1 4-5 3z" fill="#5059c9" stroke="none"/><path d="M6 8h10v6q-1 5-5.500 5T6 14z" fill="#7b83eb" stroke="none"/><path d="M0 5h10.500v10H0z" fill="#4b53bc" stroke="none"/><path d="M2.700 7.500h5M5.200 7.500v5.500" stroke="#fff" stroke-width="1.500"/>`))}
      ${app("run", i20(svg`<path d="M0 1h7l2 2.500h11V10H0z" fill="#dc9a18" stroke="none"/><path d="M0 4.500h20V19H0z" fill="#ffcf48" stroke="none"/><path d="M3.500 19v-5q0-1 1-1h11q1 0 1 1v5z" fill="#1479c9" stroke="none"/><path d="M6 16h8" stroke="#0b4f93"/>`))}
      ${app("run", i20(svg`<defs><linearGradient id="ed" x1="0" x2="1" y2=".3"><stop stop-color="#27a8e8"/><stop offset="1" stop-color="#65dc6c"/></linearGradient></defs>
          <circle cx="10" cy="10" r="10" fill="#1267bd" stroke="none"/><path d="M0 9.500C.5 4 4.500 0 10.300 0 16 0 20 4 20 8.500c0 3-2.200 4.800-5 4.800-2.500 0-3.300-1-2.500-2C14 8.500 11.500 6 8 6 4 6 1 7.500 0 9.500z" fill="url(#ed)" stroke="none"/><path d="M8 7C3 9 4 17 9.500 19.500 3 21-2 13 1 9q3-3 7-2z" fill="#1b85dc" stroke="none"/><path d="M12.300 11.500c-1 2 3.700 3.500 7 1.300-1 2.200-3 3.500-5.300 3.500-4 0-6-5-3.500-7.500 1.500 0 2.300 1.500 1.800 2.700z" fill="#1c1c1c" stroke="none"/>`))}
      ${app("", i20(svg`<path d="M5 4V.8h10V4" stroke="#44b4e8" stroke-width="1.200"/><rect x="0" y="3" width="20" height="17" rx="2.500" fill="#f4f4f4" stroke="none"/><path d="M6 7.500h3.700v3.700H6z" fill="#f0512a" stroke="none"/><path d="M10.300 7.500H14v3.700h-3.700z" fill="#7cba2b" stroke="none"/><path d="M6 11.800h3.700v3.700H6z" fill="#21a2e8" stroke="none"/><path d="M10.300 11.800H14v3.700h-3.700z" fill="#fbb61c" stroke="none"/>`))}
      ${app("run", codeLogo(20))}
      ${app("run sel", cup(20))}
      <div class="tray">
        <div class="up">${icon(9, 6, "0 0 9 6", svg`<path d="m2.800 4 3.700-3.700L10.200 4" stroke-width="1.300"/>`)}</div>
        <div class="lang">ENG<br />IN</div>
        <div class="sys">${icon(13, 11, "0 0 13 11", svg`<path d="M.5 4.500q6-6 12 0M2.300 6.500q4.200-4 8.400 0M4.200 8.500q2.300-2 4.600 0" stroke-width="1.200"/><circle cx="6.500" cy="9.700" r="1" fill="currentColor" stroke="none"/>`)}</div>
        <div class="sys">${icon(14, 10, "0 0 14 10", svg`<path d="M.6 3.200h2.500L6.200.8v8.400L3.100 6.800H.6zM9 3.300l3.700 3.700M12.700 3.300 9 7"/>`)}</div>
        <div class="sys">${icon(14, 12, "0 0 14 12", svg`<path d="M5 2.500h6.500q1 0 1 1v5q0 1-1 1H5M13.500 5v2.500"/><path d="M1 3h5v3q0 2-2.500 3Q1 8 1 6zM2.300 0v3M4.800 0v3" fill="currentColor"/><path d="M3.500 9v2.500"/>`)}</div>
        <div class="time"><span>09:22</span><span>23-10-2024</span></div>
        <div class="bell">${icon(11, 13, "0 0 11 13", svg`<path d="M0 10h11L9.700 7.800V4.500a4.200 4.200 0 0 0-8.400 0v3.300zM3.700 11a1.800 1.800 0 0 0 3.600 0z" fill="#8ce0fa" stroke="none"/>`)}</div>
      </div>`;
  }
}

@customElement("app-root")
class AppRoot extends LitElement {
  static styles = css`
    :host { display: block; position: relative; width: 1280px; height: 720px; overflow: hidden; background: #1c1c1c; }
    file-explorer { position: absolute; left: 27px; top: 0; }
    java-window { position: absolute; left: 769px; top: 81px; }
  `;
  render() {
    return html`<code-editor></code-editor><task-bar></task-bar><file-explorer></file-explorer><java-window></java-window>`;
  }
}
